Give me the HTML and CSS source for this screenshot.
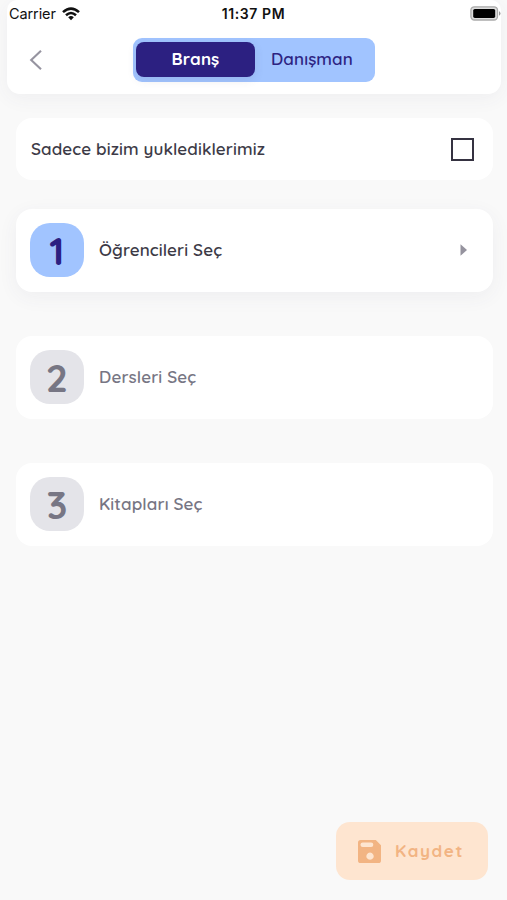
FILE: index.html
```html
<!DOCTYPE html>
<html lang="tr">
<head>
<meta charset="utf-8">
<title>Kaydet</title>
<link rel="stylesheet" href="styles.css">
</head>
<body>
<div class="app">
  <header class="header">
    <div class="status">
      <div class="carrier"><span>Carrier</span>
        <svg width="18" height="14" viewBox="0 0 18 14" fill="none" stroke="#111" stroke-width="2.6"><path d="M1 5.1Q9-2 17 5.1M4 8.2Q9 3.8 14 8.2"/><path d="M6.2 10.2Q9 7.8 11.8 10.2L9 13.2Z" fill="#111" stroke="none"/></svg>
      </div>
      <span class="time">11:37 PM</span>
      <svg class="battery" width="31" height="15" viewBox="0 0 31 15"><rect x=".9" y=".8" width="26.6" height="13.2" rx="3.5" fill="#ddd" stroke="#aaa" stroke-width="1.3"/><rect x="3.2" y="2.9" width="22" height="9" rx="1.6" fill="#000"/><path d="M29 5q3 2.400 0 4.800z" fill="#999"/></svg>
    </div>
    <div class="toolbar">
      <svg class="back" width="14" height="22" viewBox="0 0 14 22" fill="none" stroke="#9694a0" stroke-width="2.1"><path d="M12 1.7 2.2 11 12 20.3"/></svg>
      <div class="tabs">
        <div class="tab tab-active"><span>Branş</span></div>
        <div class="tab"><span>Danışman</span></div>
      </div>
    </div>
  </header>
  <main class="content">
    <label class="card filter"><span>Sadece bizim yuklediklerimiz</span><span class="checkbox"></span></label>
    <section class="card step step-active">
      <div class="number">1</div><span>Öğrencileri Seç</span>
      <svg class="arrow" width="8" height="12" viewBox="0 0 8 12"><path d="M.5.3 7 6 .5 11.7z" fill="#95939e"/></svg>
    </section>
    <section class="card step"><div class="number">2</div><span>Dersleri Seç</span></section>
    <section class="card step"><div class="number">3</div><span>Kitapları Seç</span></section>
  </main>
  <footer class="footer">
    <div class="save">
      <svg width="23" height="23" viewBox="0 0 22 22"><path fill="#f2b483" fill-rule="evenodd" d="M2.5 0H17l5 5v14.5a2.5 2.5 0 0 1-2.5 2.5h-17A2.5 2.5 0 0 1 0 19.5v-17A2.5 2.5 0 0 1 2.5 0ZM4.5 2.500A2 2 0 0 0 4.500 6.800H12.500A2 2 0 0 0 12.500 2.500ZM11.500 12a3.500 3.500 0 1 0 .01 0Z"/></svg>
      <span class="save-label">Kaydet</span>
    </div>
  </footer>
</div>
</body>
</html>
```
FILE: styles.css
```css
* { box-sizing: border-box; }
body { margin: 0; background: #f9f9f9; font-family: Quicksand, Lato, "Noto Sans", sans-serif; font-size: 17px; font-weight: 600; letter-spacing: .1px; line-height: 22px; }
.app { height: 900px; display: flex; flex-direction: column; overflow: hidden; }
.header { height: 94px; margin: 0 6px 0 7px; background: #fff; border-radius: 10px 10px 13px 13px; box-shadow: 0 4px 20px rgba(70, 70, 110, .06); }
.status { height: 27px; padding: 0 0 0 2px; display: grid; grid-template-columns: 1fr auto 1fr; align-items: center; font-family: Inter, sans-serif; font-size: 14.5px; font-weight: 400; color: #111; }
.carrier { display: flex; align-items: center; gap: 6px; }
.carrier span { letter-spacing: -.1px; }
.time { font-weight: 600; font-size: 14px; letter-spacing: .6px; margin-right: 3px; }
.battery { justify-self: end; }
.toolbar { height: 65px; display: grid; grid-template-columns: 126px 242px; align-items: center; }
.back { margin-left: 22px; }
.tabs { height: 44px; padding: 4px 4px 5px 3px; display: flex; background: #a1c4ff; border-radius: 9px; }
.tab { width: 114px; display: flex; align-items: center; justify-content: center; color: #2d2382; }
.tab-active { width: 119px; background: #2c2081; color: #fff; font-weight: 700; border-radius: 8px; box-shadow: 0 3px 10px rgba(70, 70, 110, .12); }
.content { padding: 24px 14.5px 0 15.5px; }
.card { background: #fff; border-radius: 16px; display: flex; align-items: center; padding: 0 14.5px; }
.filter { height: 62px; justify-content: space-between; padding: 0 19px 0 15.5px; margin-bottom: 29px; color: #3d3b47; }
.filter span:first-child { padding-bottom: 1px; }
.checkbox { width: 23px; height: 23px; border: 2px solid #353241; }
.step { height: 83px; padding-bottom: 1px; margin-bottom: 44px; color: #777684; }
.step-active { color: #3d3b47; box-shadow: 0 5px 20px rgba(70, 70, 110, .06); }
.number { width: 54px; height: 54px; margin-right: 15px; border-radius: 20px; background: #e4e4e9; display: flex; align-items: center; justify-content: center; font-size: 39px; font-weight: 700; line-height: 54px; padding-top: 1px; }
.step-active .number { background: #a1c4ff; color: #2c2081; }
.arrow { margin-left: auto; margin-right: 10px; }
.footer { margin-top: auto; padding: 0 19px 20px; display: flex; justify-content: flex-end; }
.save { width: 152px; height: 58px; padding-left: 22px; border-radius: 14px; background: #fee5d0; color: #f2b483; display: flex; align-items: center; gap: 14px; }
.save-label { font-weight: 700; letter-spacing: 1.6px; }
```
